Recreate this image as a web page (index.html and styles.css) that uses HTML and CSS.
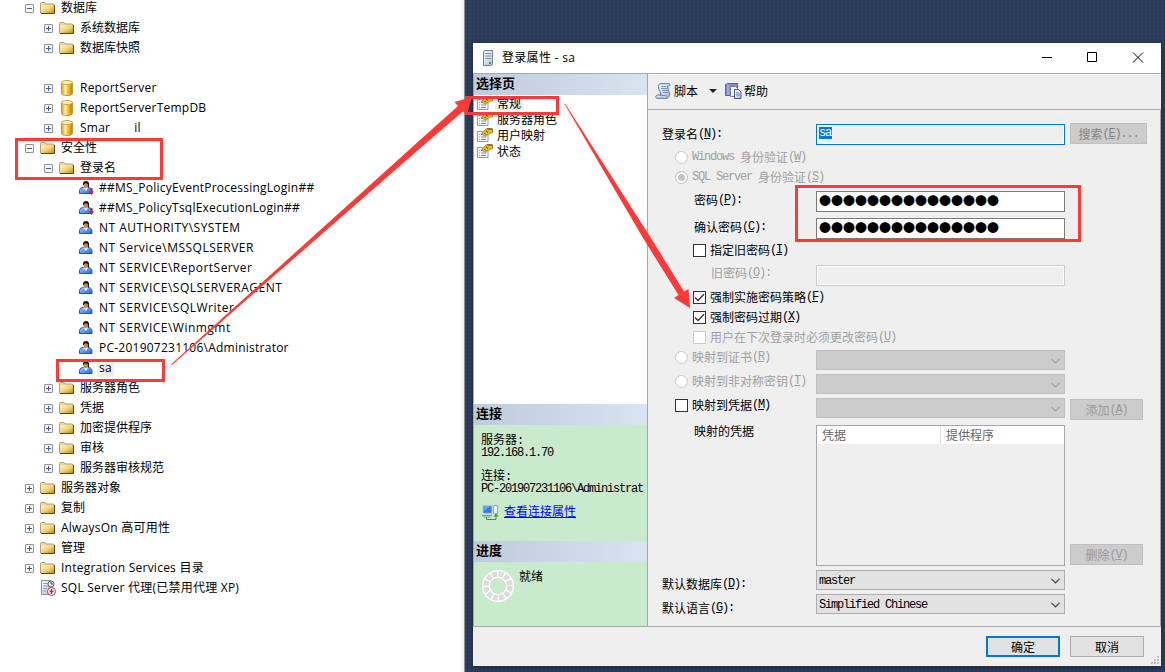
FILE: index.html
```html
<!DOCTYPE html>
<html lang="zh-CN">
<head>
    <meta charset="UTF-8">
    <title>登录属性 - sa</title>
    <link rel="stylesheet" href="styles.css">
</head>
<body>
    <!-- icons -->
    <svg class="defs" width="0" height="0">
        <defs>
            <linearGradient id="gFolder" x1="0" y1="0" x2="1" y2="1">
                <stop offset="0" stop-color="#fff6c4"/><stop offset=".5" stop-color="#f3d279"/><stop offset="1" stop-color="#c98a12"/>
            </linearGradient>
            <linearGradient id="gDb" x1="0" x2="1" y1="0" y2="0">
                <stop offset="0" stop-color="#d99a1c"/><stop offset=".35" stop-color="#fff0b0"/><stop offset=".6" stop-color="#f0bd38"/><stop offset="1" stop-color="#c07c08"/>
            </linearGradient>
            <linearGradient id="gUser" x1="0" y1="0" x2="1" y2="1">
                <stop offset="0" stop-color="#a9ccff"/><stop offset="1" stop-color="#1f62dc"/>
            </linearGradient>
            <linearGradient id="gPaper" x1="0" y1="0" x2="1" y2="1">
                <stop offset="0" stop-color="#fff"/><stop offset="1" stop-color="#a9bfdc"/>
            </linearGradient>
        </defs>
        <symbol id="folder" viewBox="0 0 15 12">
            <path d="M.5 2.5V1.2L1.2.5H5l1 1.5h7.5v9H.5z" fill="#ecdca0" stroke="#b3a06a"/>
            <path d="M1 3.5h13V11H1z" fill="url(#gFolder)"/>
            <path d="M14.5 3v8.5H1" fill="none" stroke="#5c4411"/>
        </symbol>
        <symbol id="db" viewBox="0 0 12 16">
            <path d="M.5 2.5v11c0 1.2 2.400 2 5.500 2s5.500-.8 5.500-2v-11z" fill="url(#gDb)" stroke="#c9982c"/>
            <ellipse cx="6" cy="2.500" rx="5.500" ry="2" fill="#fff2bd" stroke="#c9a548"/>
        </symbol>
        <symbol id="user" viewBox="0 0 14 13">
            <path d="M.5 12.500V9.500C.5 7.500 3 6.500 4.500 6.300h4c2 .2 4.500 1.200 4.500 3.200v3z" fill="url(#gUser)" stroke="#2457b5"/>
            <path d="M4.500 6.300L7 10l2-3.700z" fill="#fff"/>
            <path d="M4.500 3h4.500v2.500L7 7.500 5 6.500z" fill="#c68b5c"/>
            <path d="M4 4.500V2Q4.500 0 7 0t3 2.200V6L8.800 6V3L6 2.600z" fill="#1d1512"/>
        </symbol>
        <symbol id="down" viewBox="0 0 5 7">
            <path d="M1.500 0h2v3.500H5L2.500 7 0 3.500h1.500z" fill="#c8202c"/>
        </symbol>
        <symbol id="agent" viewBox="0 0 16 16">
            <path d="M1.500.5h9v14h-9z" fill="url(#gPaper)" stroke="#8292a8"/>
            <path d="M3 3.500h5M3 6h6M3 8.500h4M3 11h3" stroke="#8fa1ba"/>
            <circle cx="11" cy="4" r="3" fill="#fff" stroke="#555f70"/>
            <path d="M11 2v2h2" fill="none" stroke="#333"/>
            <circle cx="11.500" cy="11.500" r="4" fill="#fff" stroke="#a04848"/>
            <path d="M11.500 9v5M9.500 11.500h4" stroke="#d02020" stroke-width="1.400"/>
        </symbol>
        <symbol id="server" viewBox="0 0 10 16">
            <path d="M.5 1.500L2 .5h7.500v14l-1.500 1H.5z" fill="url(#gPaper)" stroke="#71819a"/>
            <path d="M2 3.500h6M2 6h6M2 8.500h6" stroke="#7c93b5"/>
            <path d="M6 13h2" stroke="#3fb618" stroke-width="2"/>
        </symbol>
        <symbol id="page" viewBox="0 0 16 14">
            <path d="M.5 3.500h10.500v10H.5z" fill="#fff" stroke="#8d9bb0"/>
            <path d="M2 6.500h1M4 6.500h3M2 9h1M4 9h5M2 11.500h1M4 11.500h5" stroke="#6c84cc"/>
            <path d="M4.500 6L8 1.800 10 .5l5.500.5v4L12 5.300 9 8.500z" fill="#e9b82c" stroke="#a57c1c" stroke-width=".8"/>
            <path d="M7.500 5l1.500 1.500M10.500 1h5M9 3l2 1.500" stroke="#4a3b12" fill="none"/>
        </symbol>
        <symbol id="script" viewBox="0 0 16 16">
            <path d="M5 .7h9.500c1.500 2-.5 3-2 2.300 0 3 2 5 2 9-.2 2-1.200 3.300-3 3.300H1.500C0 13.500 1 12 3 12h3c0-3-2.500-4-2.500-8 0-2 .5-3.300 1.500-3.300z" fill="url(#gPaper)" stroke="#5a76a6"/>
            <path d="M6 3.500h5M6 5.500h6M7 7.500h6M8 9.500h5M5 12.500h6c1 0 1 2-.5 2.500" stroke="#6483b4" fill="none" stroke-width=".8"/>
        </symbol>
        <symbol id="help" viewBox="0 0 17 16">
            <path d="M.5 1.500L2.500.5h10v12H.5z" fill="#8a8cd0" stroke="#5c5fa3"/>
            <path d="M3 1v11" stroke="#bcbef0"/>
            <path d="M5.500 3.500h5l2 2v8h-7z" fill="#fff" stroke="#7482a8"/>
            <path d="M9.500 6.500h4l2.500 2.500v6.500H9.500z" fill="url(#gPaper)" stroke="#3f5c86"/>
            <path d="M11 10h3M11 12h4" stroke="#6a88b5"/>
        </symbol>
        <symbol id="conn" viewBox="0 0 17 16">
            <path d="M1 .7h9v7.600H1z" fill="#2d7cf0" stroke="#b9c4d6"/>
            <path d="M2 2h5M2 4h3" stroke="#8fc0ff"/>
            <path d="M0 10.500h10M1.500 12h7" stroke="#8592a8"/>
            <path d="M11.500.5h4v8h-4z" fill="#eef2f8" stroke="#9aa6b8"/>
            <path d="M4.500 12v2.500h9.500V10" fill="none" stroke="#3c9a1a"/>
            <path d="M11.500 11.500L14 8.500l2.500 3z" fill="#3c9a1a"/>
        </symbol>
        <symbol id="chev" viewBox="0 0 9 6">
            <path d="M.5.8l4 4 4-4" fill="none" stroke="currentColor" stroke-width="1.200"/>
        </symbol>
        <symbol id="tick" viewBox="0 0 11 11">
            <path d="M1 5.500l3 3L10 2.200" fill="none" stroke="#333" stroke-width="1.300"/>
        </symbol>
    </svg>

    <div class="screen">
        <div class="tree">
            <div class="row l1"><i class="tg"></i><svg class="folder"><use href="#folder"/></svg><span>数据库</span></div>
            <div class="row l2"><i class="tg plus"></i><svg class="folder"><use href="#folder"/></svg><span>系统数据库</span></div>
            <div class="row l2"><i class="tg plus"></i><svg class="folder"><use href="#folder"/></svg><span>数据库快照</span></div>
            <div class="row"></div>
            <div class="row l2 en"><i class="tg plus"></i><svg class="db"><use href="#db"/></svg><span>ReportServer</span></div>
            <div class="row l2 en"><i class="tg plus"></i><svg class="db"><use href="#db"/></svg><span>ReportServerTempDB</span></div>
            <div class="row l2 en"><i class="tg plus"></i><svg class="db"><use href="#db"/></svg><span>Smar</span><span class="rest">il</span></div>
            <div class="row l1"><i class="tg"></i><svg class="folder"><use href="#folder"/></svg><span>安全性</span></div>
            <div class="row l2"><i class="tg"></i><svg class="folder"><use href="#folder"/></svg><span>登录名</span></div>
            <div class="row l3 en"><svg class="user"><use href="#user"/></svg><svg class="down"><use href="#down"/></svg><span>##MS_PolicyEventProcessingLogin##</span></div>
            <div class="row l3 en"><svg class="user"><use href="#user"/></svg><svg class="down"><use href="#down"/></svg><span>##MS_PolicyTsqlExecutionLogin##</span></div>
            <div class="row l3 nt"><svg class="user"><use href="#user"/></svg><span>NT AUTHORITY\SYSTEM</span></div>
            <div class="row l3 nt"><svg class="user"><use href="#user"/></svg><span>NT Service\MSSQLSERVER</span></div>
            <div class="row l3 nt"><svg class="user"><use href="#user"/></svg><span>NT SERVICE\ReportServer</span></div>
            <div class="row l3 nt"><svg class="user"><use href="#user"/></svg><span>NT SERVICE\SQLSERVERAGENT</span></div>
            <div class="row l3 nt"><svg class="user"><use href="#user"/></svg><span>NT SERVICE\SQLWriter</span></div>
            <div class="row l3 nt"><svg class="user"><use href="#user"/></svg><span>NT SERVICE\Winmgmt</span></div>
            <div class="row l3 en"><svg class="user"><use href="#user"/></svg><span>PC-201907231106\Administrator</span></div>
            <div class="row l3 en"><svg class="user"><use href="#user"/></svg><span class="sel">sa</span></div>
            <div class="row l2"><i class="tg plus"></i><svg class="folder"><use href="#folder"/></svg><span>服务器角色</span></div>
            <div class="row l2"><i class="tg plus"></i><svg class="folder"><use href="#folder"/></svg><span>凭据</span></div>
            <div class="row l2"><i class="tg plus"></i><svg class="folder"><use href="#folder"/></svg><span>加密提供程序</span></div>
            <div class="row l2"><i class="tg plus"></i><svg class="folder"><use href="#folder"/></svg><span>审核</span></div>
            <div class="row l2"><i class="tg plus"></i><svg class="folder"><use href="#folder"/></svg><span>服务器审核规范</span></div>
            <div class="row l1"><i class="tg plus"></i><svg class="folder"><use href="#folder"/></svg><span>服务器对象</span></div>
            <div class="row l1"><i class="tg plus"></i><svg class="folder"><use href="#folder"/></svg><span>复制</span></div>
            <div class="row l1 en"><i class="tg plus"></i><svg class="folder"><use href="#folder"/></svg><span>AlwaysOn 高可用性</span></div>
            <div class="row l1"><i class="tg plus"></i><svg class="folder"><use href="#folder"/></svg><span>管理</span></div>
            <div class="row l1 en"><i class="tg plus"></i><svg class="folder"><use href="#folder"/></svg><span>Integration Services 目录</span></div>
            <div class="row l1 en"><i class="tg none"></i><svg class="agent"><use href="#agent"/></svg><span>SQL Server 代理(已禁用代理 XP)</span></div>
        </div>

        <div class="dialog">
            <div class="titlebar">
                <svg class="server"><use href="#server"/></svg>
                <span class="title">登录属性 - sa</span>
                <svg class="winbtns" viewBox="0 0 103 11">
                    <path d="M0 5.500h10M45.500.5h9v9h-9zM91 .5l10 10M101 .5l-10 10" fill="none" stroke="#000"/>
                </svg>
            </div>

            <div class="body">
                <div class="side">
                    <div class="head">选择页</div>
                    <div class="pages">
                        <div class="page"><svg><use href="#page"/></svg><span class="sel">常规</span></div>
                        <div class="page"><svg><use href="#page"/></svg><span>服务器角色</span></div>
                        <div class="page"><svg><use href="#page"/></svg><span>用户映射</span></div>
                        <div class="page"><svg><use href="#page"/></svg><span>状态</span></div>
                    </div>
                    <div class="head">连接</div>
                    <div class="green conn">
                        <div class="line">服务器<b>:</b></div>
                        <div class="line"><b>192.168.1.70</b></div>
                        <div class="line second">连接<b>:</b></div>
                        <div class="line"><b>PC-201907231106\Administrat</b></div>
                        <div class="link"><svg><use href="#conn"/></svg><a>查看连接属性</a></div>
                    </div>
                    <div class="head">进度</div>
                    <div class="green progress">
                        <svg viewBox="0 0 32 32">
                            <circle cx="16" cy="16" r="12" fill="none" stroke="#fff" stroke-width="8"/>
                            <circle cx="16" cy="16" r="12" fill="none" stroke="#dcdcdc" stroke-width="5.500" stroke-dasharray="5 1.283"/>
                        </svg>
                        <span>就绪</span>
                    </div>
                </div>

                <div class="main">
                    <div class="toolbar">
                        <svg class="ic"><use href="#script"/></svg><span>脚本</span>
                        <i class="caret"></i>
                        <svg class="ic help"><use href="#help"/></svg><span>帮助</span>
                    </div>
                    <div class="form">
                        <label class="p0 login">登录名<b>(<u>N</u>):</b></label>
                        <div class="field focus"><b class="mark">sa</b></div>
                        <div class="btn off search">搜索<b>(<u>E</u>)...</b></div>

                        <label class="p1 off"><i class="radio"></i><b>Windows </b>身份验证<b>(<u>W</u>)</b></label>
                        <label class="p1 off"><i class="radio on"></i><b>SQL Server </b>身份验证<b>(<u>S</u>)</b></label>

                        <label class="p3">密码<b>(<u>P</u>):</b></label>
                        <div class="field pwd">●●●●●●●●●●●●●●●</div>

                        <label class="p3">确认密码<b>(<u>C</u>):</b></label>
                        <div class="field pwd">●●●●●●●●●●●●●●●</div>

                        <label class="p2"><i class="check"></i>指定旧密码<b>(<u>I</u>)</b></label>

                        <label class="p4 off">旧密码<b>(<u>O</u>):</b></label>
                        <div class="field old"></div>

                        <label class="p2"><i class="check"><svg><use href="#tick"/></svg></i>强制实施密码策略<b>(<u>F</u>)</b></label>
                        <label class="p2"><i class="check"><svg><use href="#tick"/></svg></i>强制密码过期<b>(<u>X</u>)</b></label>
                        <label class="p2 off"><i class="check"></i>用户在下次登录时必须更改密码<b>(<u>U</u>)</b></label>

                        <label class="p1 map off"><i class="radio"></i>映射到证书<b>(<u>R</u>)</b></label>
                        <div class="select off"><svg><use href="#chev"/></svg></div>

                        <label class="p1 map off"><i class="radio"></i>映射到非对称密钥<b>(<u>T</u>)</b></label>
                        <div class="select off"><svg><use href="#chev"/></svg></div>

                        <label class="p1 map"><i class="check"></i>映射到凭据<b>(<u>M</u>)</b></label>
                        <div class="select off"><svg><use href="#chev"/></svg></div>
                        <div class="btn off add">添加<b>(<u>A</u>)</b></div>

                        <label class="p3 top">映射的凭据</label>
                        <div class="list">
                            <div class="cols"><span>凭据</span><span>提供程序</span></div>
                        </div>
                        <div class="btn off del">删除<b>(<u>V</u>)</b></div>

                        <label class="p0 low">默认数据库<b>(<u>D</u>):</b></label>
                        <div class="select"><b>master</b><svg><use href="#chev"/></svg></div>

                        <label class="p0 low">默认语言<b>(<u>G</u>):</b></label>
                        <div class="select"><b>Simplified Chinese</b><svg><use href="#chev"/></svg></div>
                    </div>
                </div>
            </div>

            <div class="footer">
                <div class="btn ok">确定</div>
                <div class="btn">取消</div>
                <svg class="grip" viewBox="0 0 8 8"><path d="M6 0h2v2H6zM3 3h2v2H3zM6 3h2v2H6zM0 6h2v2H0zM3 6h2v2H3zM6 6h2v2H6z" fill="#bfbfbf"/></svg>
            </div>
        </div>

        <!-- red annotations on top of everything -->
        <svg class="marks" viewBox="0 0 1165 672">
            <g fill="none" stroke="#fc3a38" stroke-width="3">
                <path d="M16.500 139.500h145v39h-145zM57.500 360.500h106v20h-106zM466.500 97.500h91v16h-91zM796.500 186.500h283v54h-283z"/>
            </g>
            <path d="M171 364.500L425 135.500 458 106 454.500 102 472 97 467 114 463 111.500 425 144 172 365z" fill="#fc3a38"/>
            <path d="M565 103.500L649 235 684 291.500 688.500 289 690 308 674 298 678.500 295 643 238 564.500 104z" fill="#fc3a38"/>
        </svg>
    </div>
</body>
</html>
```
FILE: styles.css
```css
:root {
    --ui: "Open Sans", "Noto Sans CJK SC", sans-serif;
    --song: "Noto Sans CJK SC", sans-serif;
    --line: #a5a7ad;
    --face: #efefef;
}
* {
    box-sizing: border-box;
}
body {
    margin: 0;
    font: 12px/16px var(--song);
    color: #000;
    overflow: hidden;
}
svg {
    display: block;
    flex: none;
}
.defs {
    position: absolute;
}
.screen {
    position: relative;
    width: 1165px;
    height: 672px;
    overflow: hidden;
    background-color: #2c3d5b;
    background-image: radial-gradient(#30415f 0.7px, transparent 0.9px), radial-gradient(#293956 0.7px, transparent 0.9px);
    background-size: 4px 4px;
    background-position: 0 0, 2px 2px;
}

/* object explorer */
.tree {
    width: 465px;
    height: 674px;
    margin-top: -2px;
    background: linear-gradient(to left, #eff1f3, #fff 5px);
    border-right: 1px solid #8b929e;
    font-family: var(--ui);
    font-size: 12px;
}
.row {
    display: flex;
    align-items: center;
    height: 20px;
}
.row span {
    white-space: pre;
    line-height: 18px;
}
.en { letter-spacing: 0.24px; }
.nt { letter-spacing: 0.48px; }
.l1 { padding-left: 25px; }
.l2 { padding-left: 44px; }
.l3 { padding-left: 79px; }
.tg {
    width: 9px;
    height: 9px;
    margin: 1px 6px 0 0;
    border: 1px solid #919191;
    border-radius: 1px;
    background: linear-gradient(#3b5ba5, #3b5ba5) center / 5px 1px no-repeat, #f6f6f6;
}
.tg.plus {
    background: linear-gradient(#3b5ba5, #3b5ba5) center / 5px 1px no-repeat, linear-gradient(#3b5ba5, #3b5ba5) center / 1px 5px no-repeat, #f6f6f6;
}
.tg.none {
    visibility: hidden;
}
.folder {
    width: 15px;
    height: 12px;
    margin-right: 6px;
}
.db {
    width: 12px;
    height: 16px;
    margin: 0 7px 0 2px;
}
.user {
    width: 14px;
    height: 13px;
    margin: -1px 6px 0 0;
}
.down {
    width: 5px;
    height: 7px;
    margin: 7px 5px 0 -10px;
}
.agent {
    width: 16px;
    height: 16px;
    margin-right: 5px;
}
.rest {
    margin-left: 24px;
}
.sel {
    background: #efefef;
    box-shadow: -2px 0 #efefef, 2px 0 #efefef;
}

/* login properties window */
.dialog {
    position: absolute;
    left: 473px;
    top: 43px;
    width: 688px;
    height: 623px;
    display: flex;
    flex-direction: column;
    background: var(--face);
    box-shadow: 0 0 0 1px #27303f, 0 2px 8px rgba(0,0,0,0.3);
}
b {
    font: 12px/12px "Liberation Mono", monospace;
    letter-spacing: -1.2px;
    white-space: pre;
}
.titlebar {
    display: flex;
    align-items: center;
    height: 30px;
    padding: 0 16px 0 10px;
    background: #fff;
}
.server {
    width: 10px;
    height: 16px;
}
.title {
    margin-left: 9px;
    font-family: var(--ui);
    letter-spacing: 0.3px;
}
.winbtns {
    width: 103px;
    height: 11px;
    margin: -2px 0 0 auto;
}
.body {
    display: flex;
    height: 554px;
    border-top: 1px solid var(--line);
    border-bottom: 1px solid var(--line);
}
.side {
    display: flex;
    flex-direction: column;
    width: 175px;
    border-left: 1px solid var(--line);
    border-right: 1px solid var(--line);
    background: #fff;
}
.head {
    height: 21px;
    padding-left: 2px;
    background: linear-gradient(to right, #bdcbdb, #d7e4f2);
    font-weight: bold;
    font-size: 13px;
    line-height: 17px;
}
.pages {
    height: 309px;
}
.page {
    display: flex;
    align-items: center;
    height: 16px;
    padding-left: 3px;
}
.page svg {
    width: 16px;
    height: 14px;
    margin-right: 4px;
}
.page span {
    line-height: 14px;
}
.green {
    background: #caeacd;
}
.conn {
    height: 116px;
    padding: 8px 0 0 7px;
    white-space: nowrap;
    overflow: hidden;
}
.line {
    height: 12px;
    line-height: 12px;
}
.line b {
    line-height: 0;
}
.conn .second {
    margin-top: 12px;
}
.link {
    display: flex;
    align-items: center;
    height: 16px;
    margin-top: 10px;
}
.link svg {
    width: 17px;
    height: 16px;
    margin: 4px 5px 0 1px;
}
.link a {
    color: #00f;
    text-decoration: underline;
}
.progress {
    display: flex;
    gap: 5px;
    height: 64px;
    padding: 6px 0 0 8px;
}
.progress svg {
    width: 32px;
    height: 32px;
    margin-top: 2px;
}
.main {
    flex: 1;
    border-top: 1px solid #fff;
}
.toolbar {
    display: flex;
    align-items: center;
    height: 35px;
    padding: 0 0 3px 7px;
    border-bottom: 1px solid var(--line);
}
.toolbar .ic {
    width: 16px;
    height: 16px;
    margin-right: 3px;
}
.toolbar .help {
    width: 17px;
    margin-right: 2px;
}
.caret {
    margin: 0 8px 0 11px;
    border: 4px solid transparent;
    border-top: 4px solid #222;
    border-bottom: 0;
}

.form {
    display: grid;
    grid-template-columns: 168px 249px 82px;
    grid-template-rows: 24px 20px 20px 27px 27px 19px 27px 20px 20px 20px 24px 24px 24px 148px 24px 24px;
    height: 517px;
    padding-top: 13px;
    border-right: 1px solid var(--line);
}
label {
    grid-column: 1;
    display: flex;
    align-items: center;
    white-space: nowrap;
    padding-bottom: 1px;
}
.p0 { padding-left: 14px; }
.p1 { padding-left: 27px; }
.p2 { padding-left: 45px; }
.p3 { padding-left: 46px; }
.p4 { padding-left: 63px; }
.login {
    padding-bottom: 3px;
}
.map {
    padding-bottom: 4px;
}
.top {
    align-self: start;
    height: 24px;
}
.low {
    padding-top: 11px;
}
label.off {
    color: #a0a0a0;
}
.radio, .check {
    flex: none;
    width: 13px;
    height: 13px;
    margin: 1px 4px 0 0;
    background: #fff;
    border: 1px solid #333;
}
.radio {
    border-radius: 50%;
    border-color: #c8c8c8;
}
.radio.on {
    box-shadow: inset 0 0 0 2px #fff;
    background: #c4c4c4;
}
.off .check {
    border-color: #ccc;
}
.check svg {
    width: 11px;
    height: 11px;
}
.field {
    grid-column: 2;
    align-self: end;
    height: 21px;
    margin-bottom: 2px;
    border: 1px solid #7a7a7a;
    background: #fff;
    overflow: hidden;
}
.field.focus {
    padding: 2px;
    border-color: #0078d7;
    background: var(--face);
    box-shadow: inset 0 0 0 1px #fff;
}
.mark {
    display: block;
    width: 13px;
    height: 12px;
    background: #0078d7;
    color: #fff;
    line-height: 13px;
}
.pwd {
    padding-left: 2px;
    line-height: 17px;
}
.field.old {
    margin-bottom: 1px;
    border-color: #ccc;
    background: var(--face);
    box-shadow: inset 0 0 0 1px #fff;
}
.select {
    grid-column: 2;
    align-self: end;
    display: flex;
    align-items: center;
    height: 20px;
    margin-bottom: 1px;
    padding: 1px 4px 0 2px;
    border: 1px solid #adadad;
    background: #e1e1e1;
}
.select svg {
    width: 9px;
    height: 6px;
    margin-left: auto;
    color: #444;
}
.select.off {
    border-color: #bfbfbf;
    background: #ccc;
}
.select.off svg {
    color: #a0a0a0;
}
.list {
    grid-column: 2;
    align-self: end;
    height: 141px;
    margin-bottom: 1px;
    border: 1px solid var(--line);
}
.cols {
    display: grid;
    grid-template-columns: 124px 1fr;
    height: 18px;
    background: #fff;
    color: #666;
    line-height: 18px;
}
.cols span {
    padding-left: 5px;
}
.cols span:first-child {
    border-right: 1px solid #e0e0e0;
}
.btn {
    display: flex;
    align-items: center;
    justify-content: center;
    width: 74px;
    height: 21px;
    border: 1px solid #adadad;
    background: #e1e1e1;
}
.form .btn {
    grid-column: 3;
    width: 73px;
    margin-left: 5px;
    border-color: #bfbfbf;
    background: #ccc;
    color: #9a9a9a;
}
.form .search {
    width: 77px;
    color: #838383;
}
.form .add {
    margin-top: 4px;
}
.form .del {
    align-self: end;
    margin-bottom: 2px;
}
.footer {
    flex: 1;
    position: relative;
    display: flex;
    justify-content: flex-end;
    gap: 10px;
    padding: 9px 17px 0 0;
}
.footer .ok {
    border: 2px solid #0078d7;
}
.grip {
    position: absolute;
    right: 2px;
    bottom: 2px;
    width: 8px;
    height: 8px;
}

.marks {
    position: absolute;
    left: 0;
    top: 0;
    width: 1165px;
    height: 672px;
}
```
